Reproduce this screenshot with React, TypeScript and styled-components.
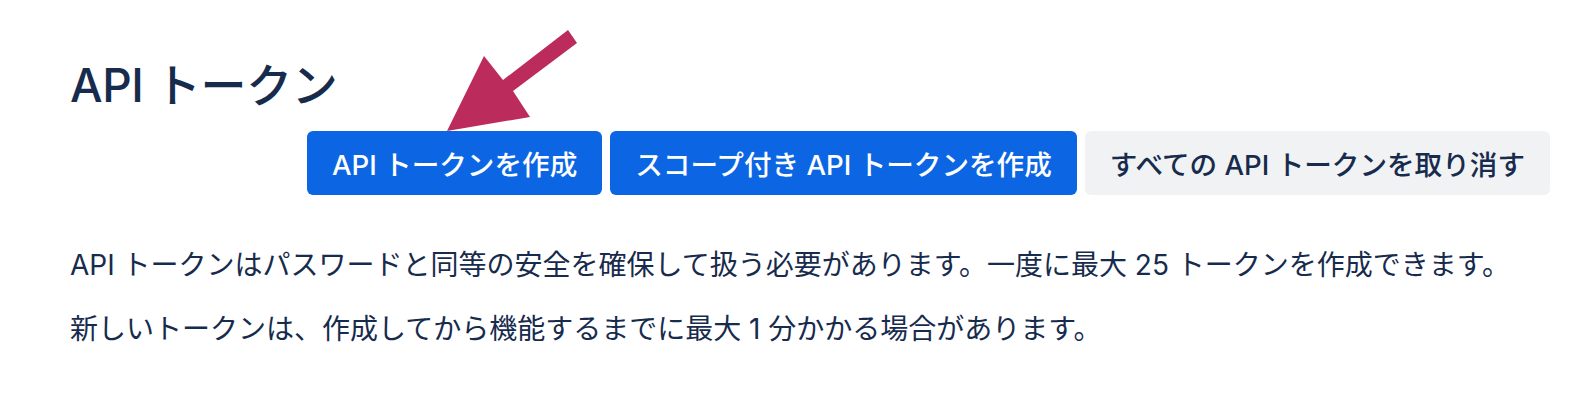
import styled, { createGlobalStyle } from "styled-components";

const GlobalStyle = createGlobalStyle`
  html, body {
    margin: 0;
    padding: 0;
    background: #ffffff;
  }
  body {
    font-family: Inter, "Noto Sans CJK JP", "Noto Sans", sans-serif;
    color: #172b4d;
  }
`;

const Page = styled.main`
  position: relative;
  padding: 56px 44px 40px 70px;
`;

// --- Header ---

const Header = styled.header`
  display: flex;
  flex-direction: column;
  gap: 17px;
`;

const Title = styled.h1`
  margin: 0;
  font-size: 46px;
  font-weight: 500;
  line-height: 58px;
  letter-spacing: -0.01em;
  color: #172b4d;
`;

const Actions = styled.div`
  display: flex;
  justify-content: flex-end;
  gap: 8px;
`;

const Button = styled.button<{ $variant?: "primary" | "default" }>`
  height: 64px;
  padding: 0 25px;
  border: none;
  border-radius: 6px;
  font-family: inherit;
  font-size: 27.6px;
  font-weight: 500;
  white-space: nowrap;
  cursor: pointer;
  background: ${(p) => (p.$variant === "primary" ? "#0c66e4" : "#f1f2f4")};
  color: ${(p) => (p.$variant === "primary" ? "#ffffff" : "#172b4d")};
`;

// --- Body ---

const Body = styled.section`
  margin-top: 50px;
  display: flex;
  flex-direction: column;
  gap: 24px;
`;

const Text = styled.p`
  margin: 0;
  font-size: 28px;
  line-height: 40px;
  color: #172b4d;
`;

const Arrow = styled.svg`
  position: absolute;
  left: 0;
  top: 0;
  pointer-events: none;
`;

export default function App() {
  return (
    <>
      <GlobalStyle />
      <Page>
        <Header>
          <Title>API トークン</Title>
          <Actions>
            <Button $variant="primary">API トークンを作成</Button>
            <Button $variant="primary">スコープ付き API トークンを作成</Button>
            <Button>すべての API トークンを取り消す</Button>
          </Actions>
        </Header>

        <Body>
          <Text>
            API トークンはパスワードと同等の安全を確保して扱う必要があります。一度に最大 25
            トークンを作成できます。
          </Text>
          <Text>新しいトークンは、作成してから機能するまでに最大 1 分かかる場合があります。</Text>
        </Body>

        <Arrow width="600" height="140" viewBox="0 0 600 140">
          <polygon
            fill="#bb2b5c"
            points="568,30 577,43 513,91 530,117 447,131 484,56 503,80"
          />
        </Arrow>
      </Page>
    </>
  );
}
